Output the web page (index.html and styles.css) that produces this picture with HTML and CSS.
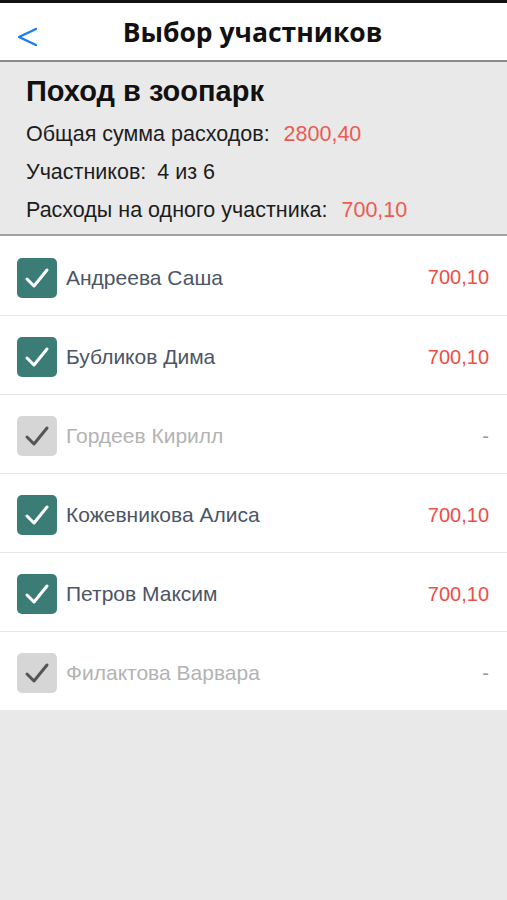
FILE: index.html
```html
<!doctype html>
<html lang="ru">
<head>
    <meta charset="UTF-8">
    <meta name="viewport" content="width=device-width, initial-scale=1.0">
    <title>Выбор участников</title>
    <link rel="stylesheet" href="styles.css">
</head>
<body>
    <!-- Navigation Bar -->
    <header class="navbar">
        <a href="#" class="back"><svg viewBox="0 0 22 20"><path d="M20 2 L3 10 L20 18"/></svg></a>
        <h1>Выбор участников</h1>
    </header>

    <!-- Summary -->
    <section class="summary">
        <h2>Поход в зоопарк</h2>
        <p>Общая сумма расходов:<span class="val sum">2800,40</span></p>
        <p>Участников:<span class="val">4 из 6</span></p>
        <p>Расходы на одного участника:<span class="val sum">700,10</span></p>
    </section>

    <!-- Members -->
    <ul class="members">
        <li class="member">
            <span class="check on"><svg viewBox="0 0 40 40"><path d="M10 21 L17 28 L30 12"/></svg></span>
            <span class="name">Андреева Саша</span>
            <span class="amount">700,10</span>
        </li>
        <li class="member">
            <span class="check on"><svg viewBox="0 0 40 40"><path d="M10 21 L17 28 L30 12"/></svg></span>
            <span class="name">Бубликов Дима</span>
            <span class="amount">700,10</span>
        </li>
        <li class="member off">
            <span class="check"><svg viewBox="0 0 40 40"><path d="M10 21 L17 28 L30 12"/></svg></span>
            <span class="name">Гордеев Кирилл</span>
            <span class="amount">-</span>
        </li>
        <li class="member">
            <span class="check on"><svg viewBox="0 0 40 40"><path d="M10 21 L17 28 L30 12"/></svg></span>
            <span class="name">Кожевникова Алиса</span>
            <span class="amount">700,10</span>
        </li>
        <li class="member">
            <span class="check on"><svg viewBox="0 0 40 40"><path d="M10 21 L17 28 L30 12"/></svg></span>
            <span class="name">Петров Максим</span>
            <span class="amount">700,10</span>
        </li>
        <li class="member off">
            <span class="check"><svg viewBox="0 0 40 40"><path d="M10 21 L17 28 L30 12"/></svg></span>
            <span class="name">Филактова Варвара</span>
            <span class="amount">-</span>
        </li>
    </ul>
</body>
</html>
```

FILE: styles.css
```css
/* General Styles */
body {
    margin: 0;
    font-family: 'Liberation Sans', Arial, sans-serif;
    background-color: #e9e9e9;
    color: #111;
    border-top: 3px solid #111;
}

/* Navbar */
.navbar {
    height: 57px;
    background-color: #fff;
    border-bottom: 2px solid #8a8a8a;
    display: flex;
    align-items: center;
    justify-content: center;
    position: relative;
}

.navbar h1 {
    margin: 0 0 0 -2px;
    font-family: 'Open Sans', sans-serif;
    font-size: 26.5px;
    font-weight: bold;
    color: #111;
}

.navbar .back {
    position: absolute;
    left: 16px;
    top: 24px;
    width: 22px;
    height: 20px;
}

.navbar .back svg {
    display: block;
    width: 22px;
    height: 20px;
    fill: none;
    stroke: #1a7cf0;
    stroke-width: 2.4;
    stroke-linecap: round;
    stroke-linejoin: round;
}

/* Summary */
.summary {
    padding: 13px 26px 5px;
    border-bottom: 2px solid #a0a0a0;
}

.summary h2 {
    margin: 0 0 7px;
    font-size: 29px;
    font-weight: bold;
}

.summary p {
    margin: 0;
    height: 38px;
    line-height: 38px;
    font-size: 21.5px;
    color: #1c1c1c;
}

.summary .val {
    margin-left: 11px;
}

.summary .sum {
    color: #ee5a52;
    margin-left: 14px;
}

/* Members */
.members {
    list-style: none;
    margin: 0;
    padding: 0;
    background-color: #fff;
}

.member {
    height: 74px;
    display: flex;
    align-items: center;
    padding: 4px 18px 0 17px;
    border-bottom: 1px solid #e6e6e6;
}

.member:first-child {
    height: 75px;
}

.member:last-child {
    border-bottom: none;
}

.check {
    width: 40px;
    height: 40px;
    border-radius: 5px;
    background-color: #d6d6d6;
    margin-right: 9px;
    flex-shrink: 0;
}

.check svg {
    display: block;
    width: 40px;
    height: 40px;
    fill: none;
    stroke: #555;
    stroke-width: 3;
    stroke-linecap: round;
    stroke-linejoin: round;
}

.check.on {
    background-color: #3c7c76;
}

.check.on svg {
    stroke: #fff;
}

.name {
    flex: 1;
    font-size: 21px;
    color: #4c5566;
}

.amount {
    font-size: 20px;
    color: #ee4e47;
}

.off .name {
    color: #b3b3b3;
}

.off .amount {
    color: #999;
}
```
